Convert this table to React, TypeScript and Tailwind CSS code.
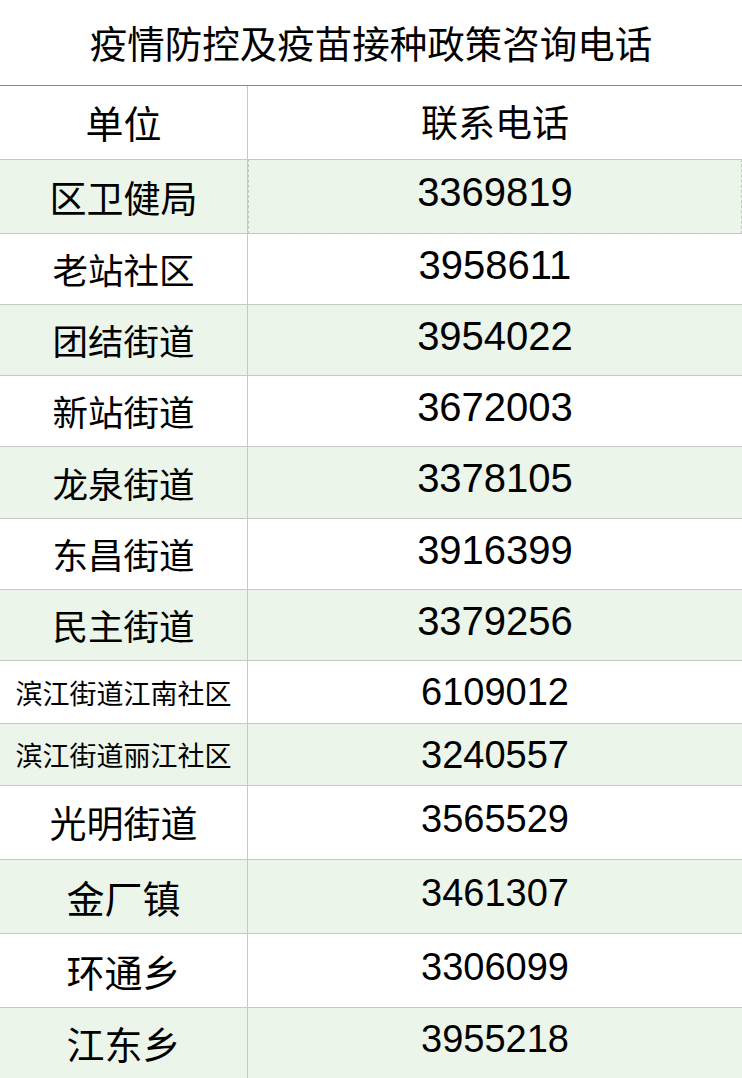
import React from 'react';

type Row = {
  unit: string;
  phone: string;
  h: string;
  unitSize: string;
  numSize: string;
  green?: boolean;
  selected?: boolean;
};

const rows: Row[] = [
  { unit: '区卫健局', phone: '3369819', h: 'h-[74px]', unitSize: 'text-[37px] pt-[2px]', numSize: 'text-[40px] pb-[9px]', green: true, selected: true },
  { unit: '老站社区', phone: '3958611', h: 'h-[71px]', unitSize: 'text-[35.5px]', numSize: 'text-[40px] pb-[9px]' },
  { unit: '团结街道', phone: '3954022', h: 'h-[71px]', unitSize: 'text-[35.5px]', numSize: 'text-[40px] pb-[9px]', green: true },
  { unit: '新站街道', phone: '3672003', h: 'h-[71px]', unitSize: 'text-[35.5px]', numSize: 'text-[40px] pb-[9px]' },
  { unit: '龙泉街道', phone: '3378105', h: 'h-[72px]', unitSize: 'text-[35.5px]', numSize: 'text-[40px] pb-[9px]', green: true },
  { unit: '东昌街道', phone: '3916399', h: 'h-[71px]', unitSize: 'text-[35.5px]', numSize: 'text-[40px] pb-[9px]' },
  { unit: '民主街道', phone: '3379256', h: 'h-[71px]', unitSize: 'text-[35.5px]', numSize: 'text-[40px] pb-[9px]', green: true },
  { unit: '滨江街道江南社区', phone: '6109012', h: 'h-[63px]', unitSize: 'text-[27px]', numSize: 'text-[38px]' },
  { unit: '滨江街道丽江社区', phone: '3240557', h: 'h-[62px]', unitSize: 'text-[27px]', numSize: 'text-[38px]', green: true },
  { unit: '光明街道', phone: '3565529', h: 'h-[74px]', unitSize: 'text-[37px]', numSize: 'text-[38px] pb-[8px]' },
  { unit: '金厂镇', phone: '3461307', h: 'h-[74px]', unitSize: 'text-[38px]', numSize: 'text-[38px] pb-[8px]', green: true },
  { unit: '环通乡', phone: '3306099', h: 'h-[74px]', unitSize: 'text-[38px]', numSize: 'text-[38px] pb-[8px]' },
  { unit: '江东乡', phone: '3955218', h: 'h-[71px]', unitSize: 'text-[38px]', numSize: 'text-[38px] pb-[8px]', green: true },
];

const cjk = "font-['Noto_Sans_CJK_SC',sans-serif]";
const num = "font-['Liberation_Sans',Arial,sans-serif]";

export default function App() {
  return (
    <div className="w-[742px] h-[1078px] overflow-hidden bg-white text-black">
      {/* Title */}
      <div className={`h-[86px] flex items-center justify-center border-b border-[#8c8c8c] ${cjk} text-[37.5px] leading-none pb-[2px]`}>
        疫情防控及疫苗接种政策咨询电话
      </div>

      {/* Header */}
      <div className="h-[74px] grid grid-cols-[248px_1fr] border-b border-[#c8c8c8]">
        <div className={`flex items-center justify-center border-r border-[#c8c8c8] ${cjk} text-[38px] leading-none pb-[2px]`}>
          单位
        </div>
        <div className={`flex items-center justify-center ${cjk} text-[37px] leading-none pb-[2px]`}>
          联系电话
        </div>
      </div>

      {rows.map(r => (
        <div
          key={r.unit}
          className={`${r.h} grid grid-cols-[248px_1fr] border-b border-[#c8c8c8] ${r.green ? 'bg-[#ebf5ea]' : 'bg-white'}`}
        >
          <div className={`flex items-center justify-center border-r border-[#c8c8c8] ${cjk} leading-none ${r.unitSize}`}>
            {r.unit}
          </div>
          <div
            className={`flex items-center justify-center ${num} leading-none ${r.numSize} ${
              r.selected ? 'border border-dashed border-[#c4c4c4] -mb-px -mt-px' : ''
            }`}
          >
            {r.phone}
          </div>
        </div>
      ))}
    </div>
  );
}
